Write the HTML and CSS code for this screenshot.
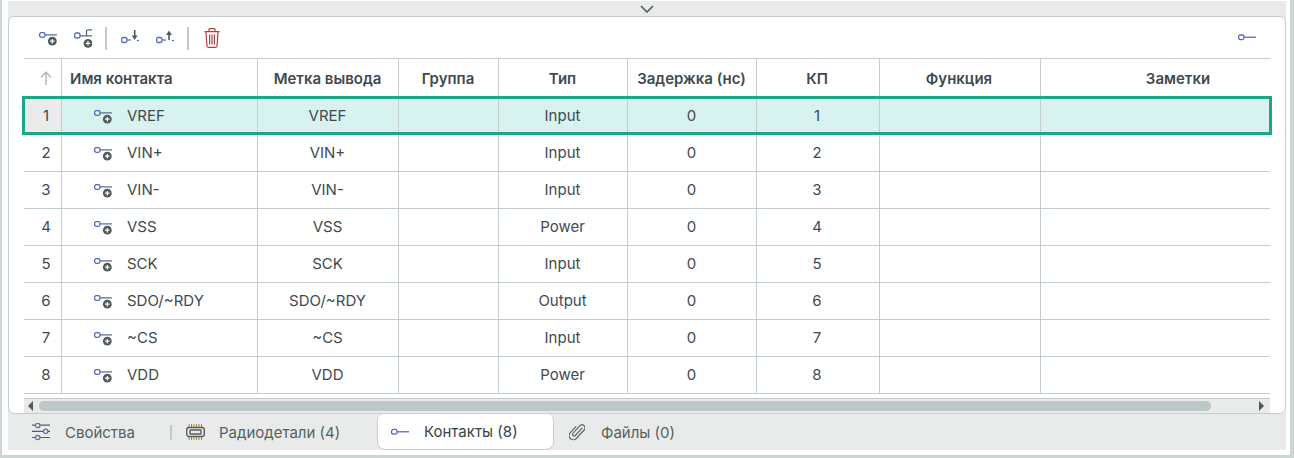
FILE: index.html
```html
<!DOCTYPE html>
<html lang="ru">
<head>
<meta charset="utf-8">
<title>Контакты</title>
<link rel="stylesheet" href="styles.css">
</head>
<body>
<svg class="defs" width="0" height="0" aria-hidden="true">
  <symbol id="pin-add" viewBox="0 0 18 14">
    <rect x="0.6" y="0.6" width="5.4" height="4.8" rx="1.8" fill="none" stroke="#5468c4" stroke-width="1.3"/>
    <path d="M6 2.9H18" stroke="#56658a" stroke-width="1.2" fill="none"/>
    <circle cx="13.3" cy="9.2" r="4.4" fill="#4f5a5a"/>
    <path d="M11 9.2h4.600M13.300 6.900v4.600" stroke="#fff" stroke-width="1.200"/>
  </symbol>
</svg>
<div class="app">
  <div class="collapse">
    <svg width="14" height="8" viewBox="0 0 14 8"><path d="M1 1 7 7l6-6" fill="none" stroke="#56615f" stroke-width="1.7"/></svg>
  </div>
  <main class="panel">
    <div class="toolbar">
      <button class="tool"><svg class="pin-icon" width="18" height="14"><use href="#pin-add"/></svg></button>
      <button class="tool"><svg width="18" height="20" viewBox="0 0 18 20"><rect x="0.6" y="5" width="5.400" height="5" rx="1.800" fill="none" stroke="#5468c4" stroke-width="1.300"/><path d="M6 7.800h6.500V3.500Q12.500 1.800 14.500 1.800H18M12.500 7.800H18" stroke="#56658a" stroke-width="1.200" fill="none"/><circle cx="14" cy="15.300" r="4.400" fill="#4f5a5a"/><path d="M11.700 15.300h4.600M14 13v4.600" stroke="#fff" stroke-width="1.200"/></svg></button>
      <span class="sep"></span>
      <button class="tool after-sep"><svg width="18" height="20" viewBox="0 0 18 20"><rect x="0.600" y="9.500" width="5.400" height="5" rx="1.800" fill="none" stroke="#5468c4" stroke-width="1.300"/><path d="M6 12h4" stroke="#5468c4" stroke-width="1.200"/><path d="M13.700 2v7" stroke="#4f5a5a" stroke-width="1.600"/><path d="M10.800 7.500h5.800l-2.900 4.500z" fill="#4f5a5a"/><path d="M15.800 12.500H18" stroke="#5468c4" stroke-width="1.200"/></svg></button>
      <button class="tool"><svg width="18" height="20" viewBox="0 0 18 20"><rect x="0.600" y="9.500" width="5.400" height="5" rx="1.800" fill="none" stroke="#5468c4" stroke-width="1.300"/><path d="M6 12h4" stroke="#5468c4" stroke-width="1.200"/><path d="M13 6v6" stroke="#4f5a5a" stroke-width="1.600"/><path d="M10.100 7h5.800L13 2.500z" fill="#4f5a5a"/><path d="M15.800 12.500H18" stroke="#5468c4" stroke-width="1.200"/></svg></button>
      <span class="sep"></span>
      <button class="tool trash"><svg width="16" height="20" viewBox="0 0 16 20"><path d="M0.500 3.600h15M5 3.400V1.500q0-.8.800-.8h4.400q.8 0 .8.800v1.900M2 3.800l.9 13.900q.1 1.600 1.600 1.600h7q1.500 0 1.600-1.600L14 3.800M5.600 6.500v10M8 6.500v10M10.400 6.500v10" fill="none" stroke="#b23f3f" stroke-width="1.200"/></svg></button>
      <button class="tool end"><svg width="18" height="20" viewBox="0 0 18 20"><rect x="0.600" y="7" width="5.400" height="4.600" rx="1.800" fill="none" stroke="#5468c4" stroke-width="1.300"/><path d="M6 9.200h12" stroke="#4a5cb8" stroke-width="1.200"/></svg></button>
    </div>
    <div class="grid">
      <div class="row head">
        <div class="cell idx"><svg width="12" height="14" viewBox="0 0 12 14"><path d="M6 14V1.200M1 6.200l5-5 5 5" fill="none" stroke="#a9b3b3" stroke-width="1.300"/></svg></div>
        <div class="cell name">Имя контакта</div>
        <div class="cell c1">Метка вывода</div>
        <div class="cell c2">Группа</div>
        <div class="cell c3">Тип</div>
        <div class="cell c4">Задержка (нс)</div>
        <div class="cell c5">КП</div>
        <div class="cell c6">Функция</div>
        <div class="cell c7">Заметки</div>
      </div>
      <div class="row selected">
        <div class="cell idx">1</div>
        <div class="cell name"><svg class="pin" width="18" height="14"><use href="#pin-add"/></svg>VREF</div>
        <div class="cell c1">VREF</div><div class="cell c2"></div><div class="cell c3">Input</div><div class="cell c4">0</div><div class="cell c5">1</div><div class="cell c6"></div><div class="cell c7"></div>
      </div>
      <div class="row">
        <div class="cell idx">2</div>
        <div class="cell name"><svg class="pin" width="18" height="14"><use href="#pin-add"/></svg>VIN+</div>
        <div class="cell c1">VIN+</div><div class="cell c2"></div><div class="cell c3">Input</div><div class="cell c4">0</div><div class="cell c5">2</div><div class="cell c6"></div><div class="cell c7"></div>
      </div>
      <div class="row">
        <div class="cell idx">3</div>
        <div class="cell name"><svg class="pin" width="18" height="14"><use href="#pin-add"/></svg>VIN-</div>
        <div class="cell c1">VIN-</div><div class="cell c2"></div><div class="cell c3">Input</div><div class="cell c4">0</div><div class="cell c5">3</div><div class="cell c6"></div><div class="cell c7"></div>
      </div>
      <div class="row">
        <div class="cell idx">4</div>
        <div class="cell name"><svg class="pin" width="18" height="14"><use href="#pin-add"/></svg>VSS</div>
        <div class="cell c1">VSS</div><div class="cell c2"></div><div class="cell c3">Power</div><div class="cell c4">0</div><div class="cell c5">4</div><div class="cell c6"></div><div class="cell c7"></div>
      </div>
      <div class="row">
        <div class="cell idx">5</div>
        <div class="cell name"><svg class="pin" width="18" height="14"><use href="#pin-add"/></svg>SCK</div>
        <div class="cell c1">SCK</div><div class="cell c2"></div><div class="cell c3">Input</div><div class="cell c4">0</div><div class="cell c5">5</div><div class="cell c6"></div><div class="cell c7"></div>
      </div>
      <div class="row">
        <div class="cell idx">6</div>
        <div class="cell name"><svg class="pin" width="18" height="14"><use href="#pin-add"/></svg>SDO/~RDY</div>
        <div class="cell c1">SDO/~RDY</div><div class="cell c2"></div><div class="cell c3">Output</div><div class="cell c4">0</div><div class="cell c5">6</div><div class="cell c6"></div><div class="cell c7"></div>
      </div>
      <div class="row">
        <div class="cell idx">7</div>
        <div class="cell name"><svg class="pin" width="18" height="14"><use href="#pin-add"/></svg>~CS</div>
        <div class="cell c1">~CS</div><div class="cell c2"></div><div class="cell c3">Input</div><div class="cell c4">0</div><div class="cell c5">7</div><div class="cell c6"></div><div class="cell c7"></div>
      </div>
      <div class="row">
        <div class="cell idx">8</div>
        <div class="cell name"><svg class="pin" width="18" height="14"><use href="#pin-add"/></svg>VDD</div>
        <div class="cell c1">VDD</div><div class="cell c2"></div><div class="cell c3">Power</div><div class="cell c4">0</div><div class="cell c5">8</div><div class="cell c6"></div><div class="cell c7"></div>
      </div>
    </div>
    <div class="scrollbar">
      <svg class="arrow" width="5" height="10" viewBox="0 0 5 10"><path d="M5 0v10L0 5z" fill="#4f5a5a"/></svg>
      <div class="track"><div class="thumb"></div></div>
      <svg class="arrow" width="5" height="10" viewBox="0 0 5 10"><path d="M0 0v10l5-5z" fill="#4f5a5a"/></svg>
    </div>
  </main>
  <nav class="tabs">
    <div class="tab first">
      <svg width="18" height="18" viewBox="0 0 18 18"><path d="M0 2.200h3M8 2.200h10M0 8.300h11M16 8.300h2M0 14.500h3M8 14.500h10" stroke="#56615f" stroke-width="1.200"/><circle cx="5.700" cy="2.400" r="2.200" fill="none" stroke="#5468c4" stroke-width="1.200"/><circle cx="13.700" cy="8.300" r="2.200" fill="none" stroke="#5468c4" stroke-width="1.200"/><circle cx="5.700" cy="14.500" r="2.200" fill="none" stroke="#5468c4" stroke-width="1.200"/></svg>
      <span>Свойства</span>
    </div>
    <span class="tab-sep"></span>
    <div class="tab parts">
      <svg width="19" height="16" viewBox="0 0 19 16"><path d="M3 0v16M5.500 0v16M8 0v16M10.500 0v16M13 0v16M15.500 0v16" stroke="#a8862f" stroke-width="1"/><rect x="0.700" y="3.500" width="17.600" height="9" rx="2.200" fill="#e9ebea" stroke="#56615f" stroke-width="1.400"/><rect x="4" y="6" width="11" height="4" rx=".6" fill="#e9ebea" stroke="#56615f" stroke-width="1.400"/></svg>
      <span>Радиодетали (4)</span>
    </div>
    <div class="tab active">
      <svg width="18" height="10" viewBox="0 0 18 10"><rect x="0.600" y="2.400" width="5.400" height="4.800" rx="1.800" fill="none" stroke="#5468c4" stroke-width="1.300"/><path d="M6 4.800h12" stroke="#4a5cb8" stroke-width="1.200"/></svg>
      <span>Контакты (8)</span>
    </div>
    <div class="tab files">
      <svg width="16" height="18" viewBox="0 0 16 18"><path d="M13.300 4.800 6.300 12.500a1.600 1.600 0 0 1-2.300-2.300L10.800 2.800a3 3 0 0 1 4.300 4.200L7.300 15.500a4.200 4.200 0 0 1-6-5.900L7.200 3.300" fill="none" stroke="#5f6868" stroke-width="1.200"/></svg>
      <span>Файлы (0)</span>
    </div>
  </nav>
</div>
</body>
</html>
```

FILE: styles.css
```css
* { box-sizing: border-box; }
html, body { margin: 0; padding: 0; }
body {
  width: 1294px;
  height: 458px;
  background: #fff;
  border-style: solid;
  border-color: #cbd5d4;
  border-width: 0 4px 3px 2px;
  font-family: Inter, "Liberation Sans", sans-serif;
  font-size: 15px;
  color: #3f4a4f;
  overflow: hidden;
}
.defs { position: absolute; }
.app {
  margin: 1px 0 0 6px;
  width: 1278px;
  height: 449px;
  background: #e9ebea;
  display: flex;
  flex-direction: column;
}
.collapse {
  height: 15px;
  display: flex;
  justify-content: center;
  align-items: center;
}
.panel {
  height: 398px;
  background: #fff;
  border: 1px solid #c3cfce;
  border-radius: 6px;
  padding: 0 15px;
  display: flex;
  flex-direction: column;
}
.toolbar {
  height: 42px;
  display: flex;
  align-items: center;
  gap: 13px;
  padding: 1px 14px 0 15px;
  border-bottom: 1px solid #c3cfce;
}
.tool {
  padding: 0;
  border: 0;
  background: none;
  display: flex;
  align-items: center;
  justify-content: center;
}
.tool + .tool { margin-left: 4px; }
.pin-icon { margin-top: 1px; }
.after-sep { margin-left: 1px; }
.tool.trash { margin-left: 2px; }
.tool.end { margin-left: auto; }
.sep { width: 2px; height: 23px; background: #bfcac9; }
.grid { display: flex; flex-direction: column; }
.row {
  display: flex;
  height: 37px;
  border-bottom: 1px solid #c3cfce;
  position: relative;
}
.row:not(.head) .cell { padding-bottom: 2px; }
.head { font-weight: 600; height: 39px; color: #3f4a4f; }
.cell {
  display: flex;
  align-items: center;
  justify-content: center;
  border-right: 1px solid #c3cfce;
  flex: none;
}
.cell:last-child { border-right: 0; }
.idx { width: 38px; padding-left: 7px; }
.name { width: 196px; justify-content: flex-start; padding-left: 8px; }
.row:not(.head) .name { padding-left: 32px; }
.pin { margin-right: 15px; margin-top: 4px; }
.c1 { width: 141px; padding-right: 1px; }
.c2 { width: 100px; padding-right: 1px; }
.c3 { width: 129px; padding-right: 1px; }
.c4 { width: 129px; padding-right: 1px; }
.c5 { width: 123px; padding-right: 2px; }
.c6 { width: 161px; padding-right: 2px; }
.c7 { width: 229px; padding-left: 45px; }
.selected { background: #d8f2f0; }
.row.selected .idx { background: #ebebeb; }
.selected::after {
  content: "";
  position: absolute;
  inset: -2px -2px -1px -2px;
  border: 3px solid #19a886;
  pointer-events: none;
}
.scrollbar {
  margin-top: 4px;
  height: 15px;
  background: #e9ebea;
  border-top: 1px solid #c3cfce;
  display: flex;
  align-items: center;
  gap: 6px;
  padding: 0 6px 0 4px;
}
.arrow { flex: none; }
.track { flex: 1; height: 10px; }
.thumb { width: 1172px; height: 10px; border-radius: 5px; background: #bcc8c8; }
.tabs {
  flex: 1;
  display: flex;
  align-items: center;
}
.tab {
  display: flex;
  align-items: center;
  height: 36px;
  color: #56615f;
}
.first { padding-left: 24px; width: 162px; gap: 15px; }
.tab-sep { width: 2px; height: 15px; background: #bfcac9; }
.parts { padding-left: 14px; width: 205px; gap: 14px; }
.active {
  width: 177px;
  padding-left: 13px;
  gap: 15px;
  background: #fff;
  border: 1px solid #c3cfce;
  border-top: 0;
  border-radius: 6px 6px 8px 8px;
  color: #37424a;
}
.files { padding-left: 15px; gap: 16px; }
```
